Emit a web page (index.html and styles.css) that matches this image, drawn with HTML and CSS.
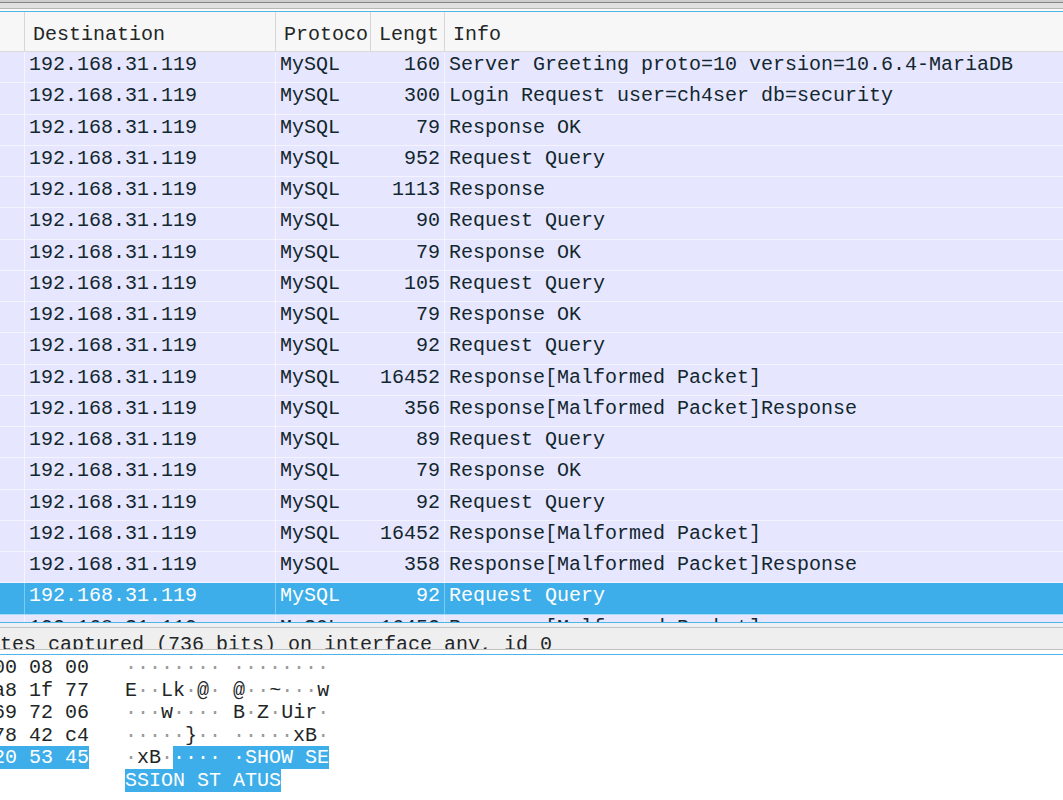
FILE: index.html
```html
<!DOCTYPE html>
<html>
<head>
<meta charset="utf-8">
<link rel="stylesheet" href="styles.css">
</head>
<body>
<div class="topbar"></div>
<div class="plist">
  <div class="phead">
    <div class="h"></div>
    <div class="h">Destination</div>
    <div class="h">Protoco</div>
    <div class="h">Lengt</div>
    <div class="h">Info</div>
  </div>
  <div class="row"><div class="c"></div><div class="c">192.168.31.119</div><div class="c">MySQL</div><div class="c n">160</div><div class="c">Server Greeting proto=10 version=10.6.4-MariaDB</div></div>
  <div class="row"><div class="c"></div><div class="c">192.168.31.119</div><div class="c">MySQL</div><div class="c n">300</div><div class="c">Login Request user=ch4ser db=security</div></div>
  <div class="row"><div class="c"></div><div class="c">192.168.31.119</div><div class="c">MySQL</div><div class="c n">79</div><div class="c">Response OK</div></div>
  <div class="row"><div class="c"></div><div class="c">192.168.31.119</div><div class="c">MySQL</div><div class="c n">952</div><div class="c">Request Query</div></div>
  <div class="row"><div class="c"></div><div class="c">192.168.31.119</div><div class="c">MySQL</div><div class="c n">1113</div><div class="c">Response</div></div>
  <div class="row"><div class="c"></div><div class="c">192.168.31.119</div><div class="c">MySQL</div><div class="c n">90</div><div class="c">Request Query</div></div>
  <div class="row"><div class="c"></div><div class="c">192.168.31.119</div><div class="c">MySQL</div><div class="c n">79</div><div class="c">Response OK</div></div>
  <div class="row"><div class="c"></div><div class="c">192.168.31.119</div><div class="c">MySQL</div><div class="c n">105</div><div class="c">Request Query</div></div>
  <div class="row"><div class="c"></div><div class="c">192.168.31.119</div><div class="c">MySQL</div><div class="c n">79</div><div class="c">Response OK</div></div>
  <div class="row"><div class="c"></div><div class="c">192.168.31.119</div><div class="c">MySQL</div><div class="c n">92</div><div class="c">Request Query</div></div>
  <div class="row"><div class="c"></div><div class="c">192.168.31.119</div><div class="c">MySQL</div><div class="c n">16452</div><div class="c">Response[Malformed Packet]</div></div>
  <div class="row"><div class="c"></div><div class="c">192.168.31.119</div><div class="c">MySQL</div><div class="c n">356</div><div class="c">Response[Malformed Packet]Response</div></div>
  <div class="row"><div class="c"></div><div class="c">192.168.31.119</div><div class="c">MySQL</div><div class="c n">89</div><div class="c">Request Query</div></div>
  <div class="row"><div class="c"></div><div class="c">192.168.31.119</div><div class="c">MySQL</div><div class="c n">79</div><div class="c">Response OK</div></div>
  <div class="row"><div class="c"></div><div class="c">192.168.31.119</div><div class="c">MySQL</div><div class="c n">92</div><div class="c">Request Query</div></div>
  <div class="row"><div class="c"></div><div class="c">192.168.31.119</div><div class="c">MySQL</div><div class="c n">16452</div><div class="c">Response[Malformed Packet]</div></div>
  <div class="row"><div class="c"></div><div class="c">192.168.31.119</div><div class="c">MySQL</div><div class="c n">358</div><div class="c">Response[Malformed Packet]Response</div></div>
  <div class="row selected"><div class="c"></div><div class="c">192.168.31.119</div><div class="c">MySQL</div><div class="c n">92</div><div class="c">Request Query</div></div>
  <div class="row"><div class="c"></div><div class="c">192.168.31.119</div><div class="c">MySQL</div><div class="c n">16452</div><div class="c">Response[Malformed Packet]</div></div>
</div>
<div class="split"></div>
<div class="detail"><div class="dtext">tes captured (736 bits) on interface any, id 0</div></div>
<div class="gap"></div>
<div class="hex">
  <div class="hl">00 08 00   <span class="d">········ ········</span></div>
  <div class="hl">a8 1f 77   E<span class="d">··</span>Lk<span class="d">·</span>@<span class="d">·</span> @<span class="d">··</span>~<span class="d">···</span>w</div>
  <div class="hl">69 72 06   <span class="d">···</span>w<span class="d">····</span> B<span class="d">·</span>Z<span class="d">·</span>Uir<span class="d">·</span></div>
  <div class="hl">78 42 c4   <span class="d">·····</span>}<span class="d">··</span> <span class="d">·····</span>xB<span class="d">·</span></div>
  <div class="hl"><span class="sel">20 53 45</span>   <span class="d">·</span>xB<span class="d">·</span><span class="sel">···· ·SHOW SE</span></div>
  <div class="hl">           <span class="sel">SSION ST ATUS</span></div>
</div>
</body>
</html>
```
FILE: styles.css
```css
* {
  box-sizing: border-box;
  margin: 0;
  padding: 0;
}

html,
body {
  width: 1063px;
  height: 800px;
  overflow: hidden;
  background: #ffffff;
}

body {
  font-family: "Liberation Mono", monospace;
  font-size: 20px;
  color: #232627;
}

.topbar {
  height: 11px;
  background: linear-gradient(to bottom,
    #cdcdcd 0, #cdcdcd 2px,
    #868686 2px, #868686 3px,
    #e0e0e0 3px, #e0e0e0 8px,
    #b8b8b8 8px, #b8b8b8 9px,
    #fbfbfb 9px, #fbfbfb 11px);
}

.plist {
  height: 612px;
  border-top: 1px solid #4fb4ea;
  border-bottom: 1px solid #4fb4ea;
  overflow: hidden;
  background: #ffffff;
}

.phead {
  display: grid;
  grid-template-columns: 24px 251px 95px 74px 1fr;
  height: 40px;
  background: #f7f7f7;
  border-bottom: 1px solid #dadada;
  color: #232627;
}

.phead .h {
  line-height: 45px;
  padding-left: 8px;
  white-space: nowrap;
  overflow: hidden;
}

.phead .h:first-child {
  padding-left: 0;
}

.phead .h + .h {
  border-left: 1px solid #d6d6d6;
}

.row {
  display: grid;
  grid-template-columns: 24px 251px 95px 74px 1fr;
  height: 31.25px;
  background: #e7e6ff;
  color: #12272e;
  border-bottom: 1px solid rgba(255, 255, 255, 0.55);
}

.row .c {
  line-height: 25.5px;
  padding-left: 4px;
  white-space: nowrap;
  overflow: hidden;
}

.row .c:nth-child(2),
.row .c:nth-child(3),
.row .c:nth-child(5) {
  border-left: 1px solid rgba(255, 255, 255, 0.6);
}

.row .c.n {
  text-align: right;
  padding-left: 0;
  padding-right: 4px;
}

.row.selected {
  background: #3daee9;
  color: #ffffff;
}

.row.selected .c:nth-child(2),
.row.selected .c:nth-child(3),
.row.selected .c:nth-child(5) {
  border-left-color: rgba(255, 255, 255, 0.35);
}

.split {
  height: 4px;
  background: #eff0f1;
}

.detail {
  height: 23px;
  background: #efefef;
  border-top: 1px solid #c4c4c4;
  border-bottom: 1px solid #c0c0c0;
  overflow: hidden;
}

.dtext {
  line-height: 34px;
  white-space: pre;
  color: #232627;
}

.gap {
  height: 4px;
  background: #ffffff;
}

.hex {
  border-top: 1px solid #4fb4ea;
  padding-top: 1px;
  height: 146px;
  overflow: hidden;
  background: #ffffff;
  color: #232627;
}

.hl {
  height: 22.5px;
  line-height: 24.5px;
  margin-left: -7px;
  white-space: pre;
}

.d {
  color: #9a9b9c;
}

.sel {
  background: #3daee9;
  color: #ffffff;
}

.sel .d {
  color: #ffffff;
}
```
